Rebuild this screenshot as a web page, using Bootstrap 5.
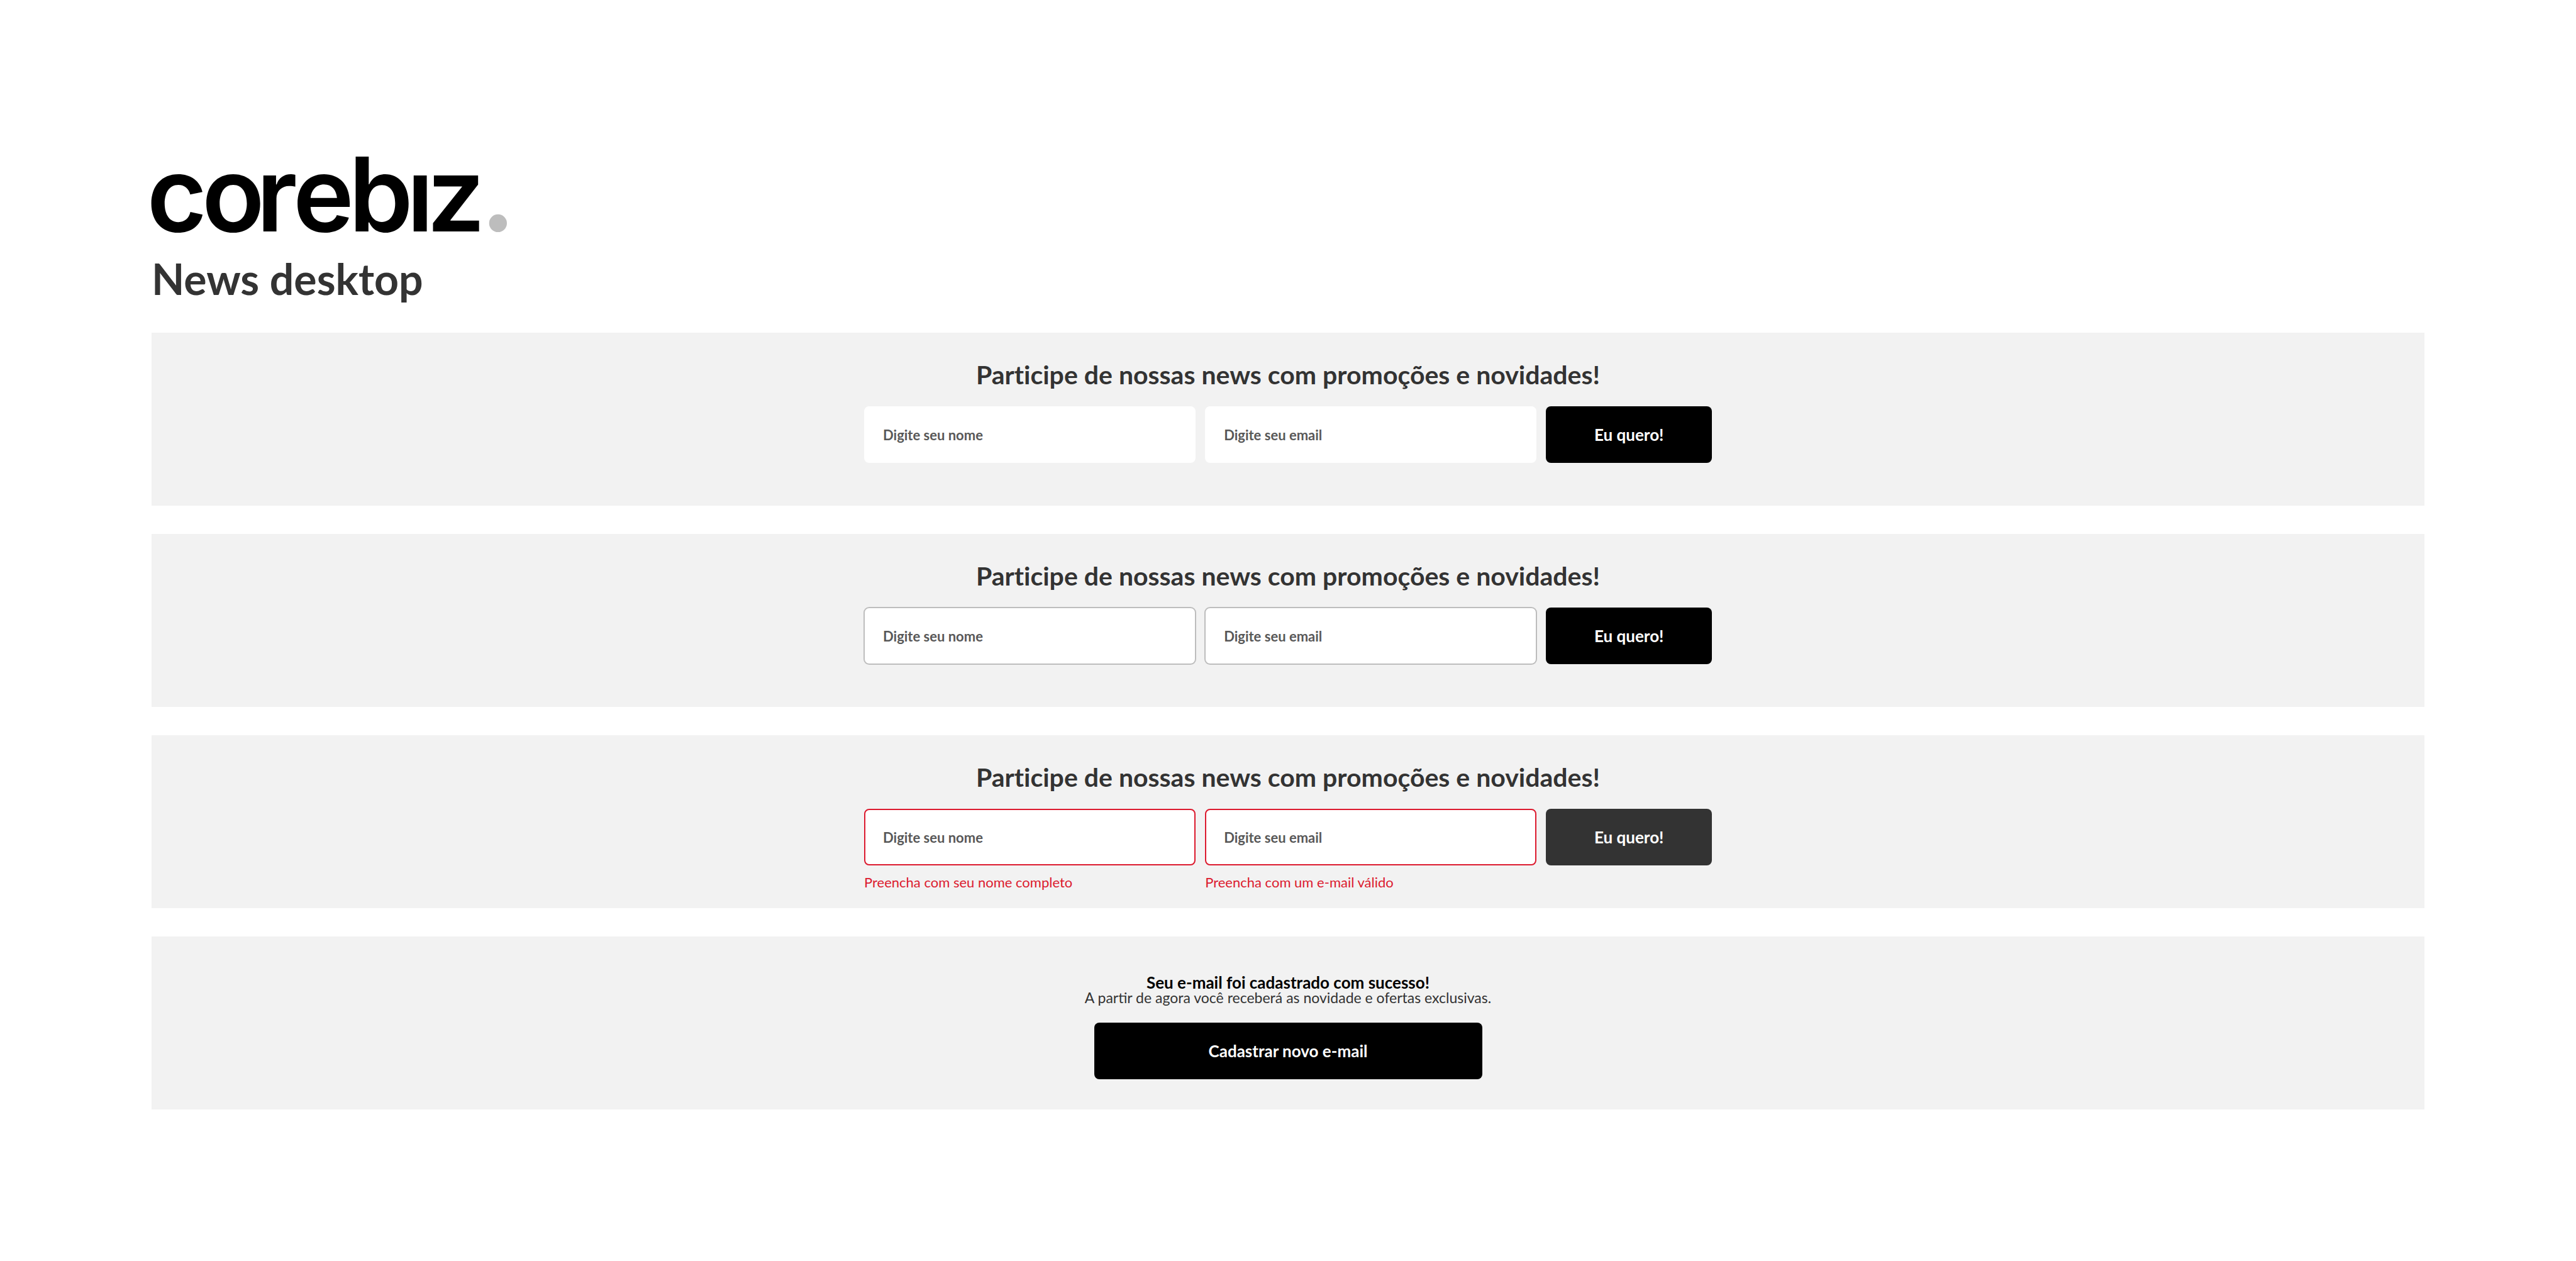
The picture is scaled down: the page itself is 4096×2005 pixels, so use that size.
<!DOCTYPE html>
<html lang="pt-BR">
<head>
<meta charset="utf-8">
<meta name="viewport" content="width=device-width, initial-scale=1">
<title>corebiz – News desktop</title>
<link href="https://cdn.jsdelivr.net/npm/bootstrap@5.3.0/dist/css/bootstrap.min.css" rel="stylesheet">
<style>
  body { font-family: Lato, "Liberation Sans", sans-serif; color: #333; background: #fff; }
  .page { padding: 241px 241px 130px; }
  .brand { width: 565px; height: auto; overflow: visible; }
  .brand text { font-family: Inter, "Liberation Sans", sans-serif; font-weight: 600; font-size: 174px; }
  .page-title { font-size: 68px; line-height: 82px; margin: 33px 0 45px; }
  .panels { gap: 45px; }
  .news { background: #f2f2f2; min-height: 275px; padding-top: 42px; }
  .news-title { font-size: 41px; line-height: 49px; margin-bottom: 26px; font-variant-ligatures: none; }
  .news-form { display: grid; grid-template-columns: 2fr 2fr 1fr; gap: 15px; width: 100%; max-width: 1348px; align-items: start; }
  .news .form-control { height: 90px; padding: 0 28px; border: 2px solid #fff; border-radius: 8px; font-size: 22px; font-weight: 700; color: #585858; background: #fff; }
  .news .form-control::placeholder { color: #585858; opacity: 1; }
  .news.outlined .form-control { border: 1px solid #bdbdbd; padding: 0 29px; box-shadow: 0 0 0 1px #bdbdbd; }
  .news.failed .form-control { border-color: #dc1a2e; background-image: none; }
  .news .invalid-feedback { font-size: 22px; line-height: 28px; margin-top: 13px; color: #dc1a2e; }
  .btn-news { height: 90px; border: 0; border-radius: 8px; background: #000; color: #fff; font-size: 26px; font-weight: 700; }
  .btn-news:hover, .btn-news.hovered { background: #333; color: #fff; }
  .news.done { padding-top: 60px; }
  .done-title { font-size: 26px; line-height: 26px; color: #000; }
  .done-text { font-size: 23px; line-height: 23px; margin-bottom: 28px; }
  .btn-wide { width: 617px; }
</style>
</head>
<body>
<main class="page">
  <svg class="brand d-block" viewBox="0 0 600 136" role="img" aria-label="corebiz">
    <text y="135" x="-8 85 177 239 333 431 465">corebız</text>
    <circle cx="585" cy="121" r="15" fill="#bdbdbd"/>
  </svg>
  <h1 class="page-title fw-bold">News desktop</h1>

  <div class="panels d-flex flex-column">
    <section class="news d-flex flex-column align-items-center">
      <h2 class="news-title fw-bold text-center">Participe de nossas news com promoções e novidades!</h2>
      <form class="news-form">
        <div>
          <input class="form-control" type="text" aria-label="Digite seu nome" placeholder="Digite seu nome">
        </div>
        <div>
          <input class="form-control" type="email" aria-label="Digite seu email" placeholder="Digite seu email">
        </div>
        <button class="btn btn-news" type="button">Eu quero!</button>
      </form>
    </section>

    <section class="news outlined d-flex flex-column align-items-center">
      <h2 class="news-title fw-bold text-center">Participe de nossas news com promoções e novidades!</h2>
      <form class="news-form">
        <div>
          <input class="form-control" type="text" aria-label="Digite seu nome" placeholder="Digite seu nome">
        </div>
        <div>
          <input class="form-control" type="email" aria-label="Digite seu email" placeholder="Digite seu email">
        </div>
        <button class="btn btn-news" type="button">Eu quero!</button>
      </form>
    </section>

    <section class="news failed d-flex flex-column align-items-center">
      <h2 class="news-title fw-bold text-center">Participe de nossas news com promoções e novidades!</h2>
      <form class="news-form">
        <div>
          <input class="form-control is-invalid" type="text" aria-label="Digite seu nome" placeholder="Digite seu nome" aria-describedby="erro-nome">
          <div class="invalid-feedback" id="erro-nome">Preencha com seu nome completo</div>
        </div>
        <div>
          <input class="form-control is-invalid" type="email" aria-label="Digite seu email" placeholder="Digite seu email" aria-describedby="erro-email">
          <div class="invalid-feedback" id="erro-email">Preencha com um e-mail válido</div>
        </div>
        <button class="btn btn-news hovered" type="button">Eu quero!</button>
      </form>
    </section>

    <section class="news done d-flex flex-column align-items-center">
      <h2 class="done-title fw-bold mb-0">Seu e-mail foi cadastrado com sucesso!</h2>
      <p class="done-text">A partir de agora você receberá as novidade e ofertas exclusivas.</p>
      <button class="btn btn-news btn-wide" type="button">Cadastrar novo e-mail</button>
    </section>
  </div>
</main>
<script src="https://cdn.jsdelivr.net/npm/bootstrap@5.3.0/dist/js/bootstrap.bundle.min.js"></script>
</body>
</html>
